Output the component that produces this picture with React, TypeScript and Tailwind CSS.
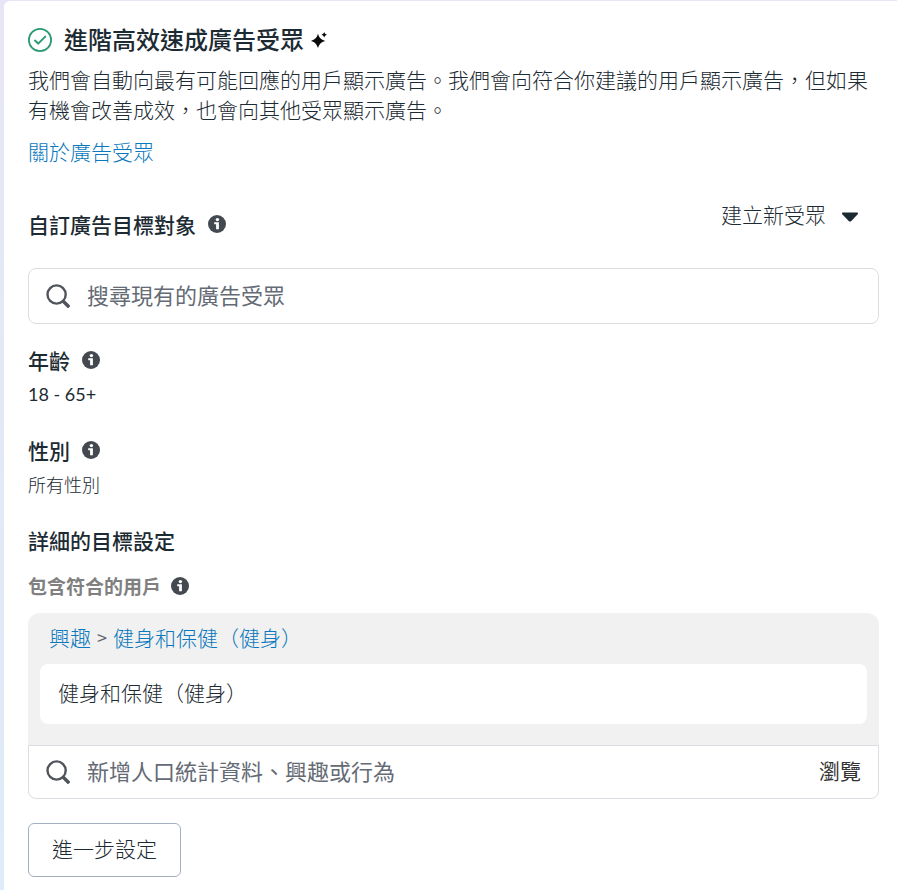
import type { ReactNode } from "react";

const InfoIcon = () => {
  return (
    <svg
      className="h-[18px] w-[18px] shrink-0"
      viewBox="0 0 18 18"
      aria-hidden="true"
    >
      <circle cx="9" cy="9" r="9" fill="#444950" />
      <circle cx="9.4" cy="4.6" r="1.7" fill="#fff" />
      <path d="M6.200 7.300h4.700v7H8.100V9.300H6.200z" fill="#fff" />
    </svg>
  );
};

const SearchIcon = () => {
  return (
    <svg
      className="h-6 w-6 shrink-0"
      viewBox="0 0 24 24"
      fill="none"
      stroke="#50555c"
      aria-hidden="true"
    >
      <circle cx="10.6" cy="10.5" r="9.1" strokeWidth="2.4" />
      <path d="M17 17l6.2 6.2" strokeWidth="3.4" />
    </svg>
  );
};

const CheckIcon = () => {
  return (
    <svg
      className="h-6 w-6 shrink-0"
      viewBox="0 0 24 24"
      fill="none"
      stroke="#2b9a76"
      aria-hidden="true"
    >
      <circle cx="12" cy="12" r="11.1" strokeWidth="1.8" />
      <path
        d="M7 12.6l3.2 3 7-7"
        strokeWidth="2"
        strokeLinecap="round"
        strokeLinejoin="round"
      />
    </svg>
  );
};

const SparkleIcon = () => {
  return (
    <svg className="h-4 w-4 shrink-0" viewBox="0 0 16 16" aria-hidden="true">
      <path
        d="M7 1.800C8.300 6 9.800 7.500 14.200 8.900 9.800 10.300 8.300 11.800 7 16 5.700 11.800 4.200 10.300 0 8.900 4.200 7.500 5.700 6 7 1.800z"
        fill="#0a0a0a"
      />
      <path
        d="M13.200 0c.6 1.700 1.100 2.200 2.800 2.800-1.700.6-2.200 1.100-2.800 2.800-.6-1.700-1.100-2.200-2.800-2.800 1.700-.6 2.200-1.100 2.800-2.800z"
        fill="#0a0a0a"
      />
    </svg>
  );
};

const FieldTitle = ({
  children,
  info = false,
}: {
  children: ReactNode;
  info?: boolean;
}) => {
  return (
    <h3 className="flex items-center gap-3 pb-1 text-[21px] leading-6 font-medium">
      {children}
      {info && <InfoIcon />}
    </h3>
  );
};

const App = () => {
  return (
    <div
      lang="zh-Hant"
      className="min-h-screen bg-linear-to-b from-[#e7e6f6] to-[#deebf8] pt-px pl-1 font-['Noto_Sans_CJK_TC',sans-serif] text-[#1c2b33]"
    >
      <main className="min-h-[calc(100vh-1px)] rounded-tl-md bg-white pt-[25px] pr-[18px] pb-3 pl-6">
        <h2 className="flex items-center text-2xl leading-7 font-medium">
          <CheckIcon />
          <span className="mr-[7px] ml-3 pb-0.5 leading-[26px]">
            進階高效速成廣告受眾
          </span>
          <SparkleIcon />
        </h2>
        <p className="mt-[10px] text-[21px] leading-[30px] font-light">
          我們會自動向最有可能回應的用戶顯示廣告。我們會向符合你建議的用戶顯示廣告，但如果有機會改善成效，也會向其他受眾顯示廣告。
        </p>
        <a
          href="#about"
          className="mt-3 inline-block text-[21px] leading-[30px] font-light text-[#0a78be]"
        >
          關於廣告受眾
        </a>

        <div className="mt-[34px] flex h-10 justify-between">
          <div className="self-end">
            <FieldTitle info>自訂廣告目標對象</FieldTitle>
          </div>
          <button
            type="button"
            className="mr-[21px] flex items-center gap-4 self-start text-[21px] leading-7 font-light"
          >
            建立新受眾
            <svg
              className="mt-1.5 h-[10px] w-4"
              viewBox="0 0 16 10"
              aria-hidden="true"
            >
              <path
                d="M1 .5h14c.9 0 1.300 1 .7 1.700L9.300 9c-.7.700-1.900.700-2.600 0L.3 2.200C-.3 1.500.1.500 1 .5z"
                fill="#1c2b33"
              />
            </svg>
          </button>
        </div>
        <label className="mt-7 flex h-14 items-center gap-[17px] rounded-lg border border-[#dadde1] px-[17px]">
          <SearchIcon />
          <input
            type="text"
            aria-label="搜尋現有的廣告受眾"
            placeholder="搜尋現有的廣告受眾"
            className="min-w-0 flex-1 pb-1 text-[22px] leading-6 outline-none placeholder:text-[#656b75]"
          />
        </label>

        <section className="mt-6">
          <FieldTitle info>年齡</FieldTitle>
          <p className="mt-1 font-['Lato',sans-serif] text-lg leading-7">
            18 - 65+
          </p>
        </section>
        <section className="mt-[30px]">
          <FieldTitle info>性別</FieldTitle>
          <p className="mt-1 text-lg leading-7 font-light">所有性別</p>
        </section>

        <section className="mt-[30px]">
          <FieldTitle>詳細的目標設定</FieldTitle>
          <h4 className="mt-4 flex items-center gap-[10px] text-[19px] leading-7 font-bold text-[#808080]">
            包含符合的用戶
            <InfoIcon />
          </h4>
          <div className="mt-[13px] rounded-t-xl bg-[#f1f1f1] px-3 pt-[10px] pb-[21px]">
            <nav className="flex gap-1.5 px-[9px] text-[21px] leading-7 font-light text-[#0a78be]">
              <a href="#interests">興趣</a>
              <span className="text-lg leading-7 font-normal text-[#606770]">
                &gt;
              </span>
              <a href="#fitness">健身和保健（健身）</a>
            </nav>
            <div className="mt-[13px] rounded-lg bg-white px-[18px] pt-[14px] pb-[18px] text-[21px] leading-7 font-light">
              健身和保健（健身）
            </div>
          </div>
          <div className="flex items-center rounded-b-lg border border-[#dadde1] px-[17px] py-3">
            <label className="flex min-w-0 flex-1 items-center gap-[17px]">
              <SearchIcon />
              <input
                type="text"
                aria-label="新增人口統計資料、興趣或行為"
                placeholder="新增人口統計資料、興趣或行為"
                className="min-w-0 flex-1 pb-1 text-[22px] leading-6 outline-none placeholder:text-[#656b75]"
              />
            </label>
            <button
              type="button"
              className="pb-1 text-[21px] leading-6 text-[#333]"
            >
              瀏覽
            </button>
          </div>
        </section>

        <button
          type="button"
          className="mt-6 rounded-md border border-[#a3b0c2] px-[23px] pt-[10px] pb-[14px] text-[21px] leading-7 font-light"
        >
          進一步設定
        </button>
      </main>
    </div>
  );
};

export default App;
